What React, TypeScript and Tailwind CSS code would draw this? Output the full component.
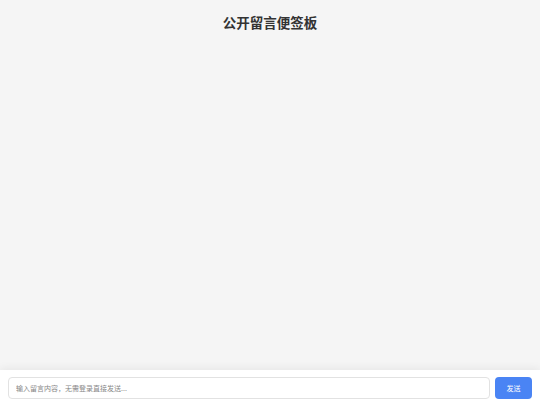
import React from "react";

export default function App() {
  return (
    <div
      className="flex h-[405px] w-[540px] flex-col bg-[#f5f5f5]"
      style={{ fontFamily: '"Noto Sans CJK SC", "Noto Sans", sans-serif' }}
    >
      <div className="flex-1 pt-[12px]">
        <h1 className="text-center text-[13.5px] font-bold leading-[20px] text-[#333333]">
          公开留言便签板
        </h1>
      </div>
      <div className="flex h-[35px] items-start gap-[5px] bg-white px-[8px] pt-[7px] shadow-[0_-2px_8px_rgba(0,0,0,0.06)]">
        <input
          className="h-[22px] flex-1 rounded-[4px] border border-[#e2e2e2] bg-white px-[7px] text-[7px] text-[#333] outline-none placeholder:text-[#888]"
          placeholder="输入留言内容，无需登录直接发送..."
        />
        <button className="h-[22px] w-[37px] rounded-[4px] bg-[#4a84f4] text-[7px] text-white">
          发送
        </button>
      </div>
    </div>
  );
}
